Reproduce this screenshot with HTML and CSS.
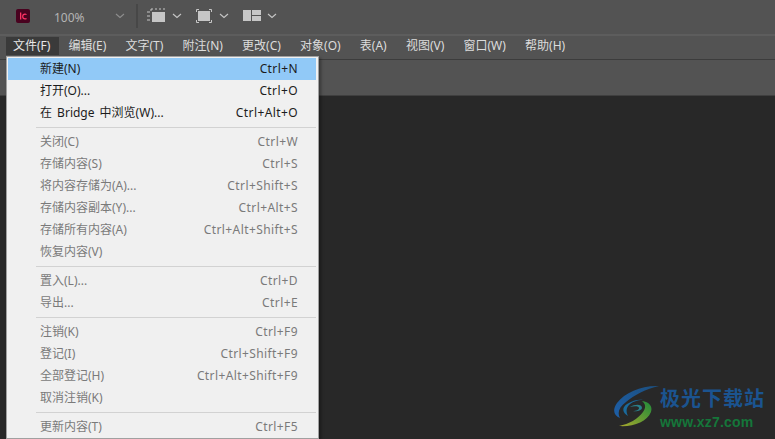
FILE: index.html
```html
<!DOCTYPE html>
<html lang="zh-CN">
<head>
<meta charset="utf-8">
<title>InCopy</title>
<link rel="stylesheet" href="styles.css">
</head>
<body>
<div class="app">
  <header class="toolbar">
    <svg class="app-icon" width="14" height="14" viewBox="0 0 14 14"><rect width="14" height="14" rx="2" fill="#49021f"/><rect x="4" y="3.5" width="1.3" height="7" fill="#ff3366"/><path d="M10.5 5.6A2.4 2.4 0 0 0 9 5.1c-1.4 0-2.3 1-2.3 2.4s.9 2.4 2.3 2.4c.6 0 1.1-.2 1.5-.5" fill="none" stroke="#ff3366" stroke-width="1.2"/></svg>
    <span class="zoom-value">100%</span>
    <svg class="chev chev-zoom" width="10" height="6" viewBox="0 0 10 6"><path d="M1 1l4 3.5L9 1" fill="none" stroke="#8e8e8e" stroke-width="1.1"/></svg>
    <span class="divider"></span>
    <svg class="tool tool-frame" width="20" height="16" viewBox="0 0 20 16"><rect x="5" y="4" width="13" height="10" fill="#c6c6c6"/><path d="M5 0v2M9 0v2M13 0v2M17 0v2M0 4h3M0 8h3M0 12h3M3 2h2" stroke="#c6c6c6" stroke-width="1" fill="none"/></svg>
    <svg class="chev" width="10" height="6" viewBox="0 0 10 6"><path d="M1 1l4 3.5L9 1" fill="none" stroke="#c6c6c6" stroke-width="1.1"/></svg>
    <svg class="tool tool-screen" width="16" height="14" viewBox="0 0 16 14"><rect x="2" y="2" width="12" height="10" fill="#c6c6c6"/><path d="M.5 3V.5H3M13 .5h2.500V3M15.500 11v2.500H13M3 13.500H.5V11" stroke="#c6c6c6" fill="none"/></svg>
    <svg class="chev" width="10" height="6" viewBox="0 0 10 6"><path d="M1 1l4 3.500L9 1" fill="none" stroke="#c6c6c6" stroke-width="1.1"/></svg>
    <svg class="tool tool-layout" width="18" height="12" viewBox="0 0 18 12"><rect width="8" height="11" fill="#c6c6c6"/><rect x="9" width="9" height="5" fill="#c6c6c6"/><rect x="9" y="6" width="9" height="5" fill="#c6c6c6"/></svg>
    <svg class="chev" width="10" height="6" viewBox="0 0 10 6"><path d="M1 1l4 3.500L9 1" fill="none" stroke="#c6c6c6" stroke-width="1.1"/></svg>
  </header>
  <nav class="menubar">
    <span class="menu-title is-open">文件(F)</span>
    <span class="menu-title">编辑(E)</span>
    <span class="menu-title">文字(T)</span>
    <span class="menu-title">附注(N)</span>
    <span class="menu-title">更改(C)</span>
    <span class="menu-title">对象(O)</span>
    <span class="menu-title">表(A)</span>
    <span class="menu-title">视图(V)</span>
    <span class="menu-title">窗口(W)</span>
    <span class="menu-title">帮助(H)</span>
  </nav>
  <div class="panelbar"></div>
  <main class="canvas"></main>
</div>

<div class="menu">
  <div class="item active"><span>新建(N)</span><span>Ctrl+N</span></div>
  <div class="item enabled"><span>打开(O)...</span><span>Ctrl+O</span></div>
  <div class="item enabled"><span>在 Bridge 中浏览(W)...</span><span>Ctrl+Alt+O</span></div>
  <div class="sep"></div>
  <div class="item"><span>关闭(C)</span><span>Ctrl+W</span></div>
  <div class="item"><span>存储内容(S)</span><span>Ctrl+S</span></div>
  <div class="item"><span>将内容存储为(A)...</span><span>Ctrl+Shift+S</span></div>
  <div class="item"><span>存储内容副本(Y)...</span><span>Ctrl+Alt+S</span></div>
  <div class="item"><span>存储所有内容(A)</span><span>Ctrl+Alt+Shift+S</span></div>
  <div class="item"><span>恢复内容(V)</span></div>
  <div class="sep"></div>
  <div class="item"><span>置入(L)...</span><span>Ctrl+D</span></div>
  <div class="item"><span>导出...</span><span>Ctrl+E</span></div>
  <div class="sep"></div>
  <div class="item"><span>注销(K)</span><span>Ctrl+F9</span></div>
  <div class="item"><span>登记(I)</span><span>Ctrl+Shift+F9</span></div>
  <div class="item"><span>全部登记(H)</span><span>Ctrl+Alt+Shift+F9</span></div>
  <div class="item"><span>取消注销(K)</span></div>
  <div class="sep"></div>
  <div class="item"><span>更新内容(T)</span><span>Ctrl+F5</span></div>
</div>

<div class="watermark">
  <svg class="wm-logo" width="46" height="42" viewBox="0 0 46 42">
    <defs>
      <linearGradient id="wmBlue" x1="0" y1="1" x2="1" y2="0"><stop offset="0" stop-color="#1d5fa8"/><stop offset="1" stop-color="#1c4f7e"/></linearGradient>
      <linearGradient id="wmGreen" x1="0" y1="1" x2="1" y2="0"><stop offset="0" stop-color="#a8a82c"/><stop offset="1" stop-color="#1e8a3a"/></linearGradient>
    </defs>
    <path d="M46 1C30 0 12 7 4 18c-5 7-3 13 3 15-3-5-1-11 6-16C21 10 33 4 46 1z" fill="url(#wmBlue)"/>
    <path d="M15 31c-5-3-7-8-1-12 6-4 12-5 16-4-6 0-11 2-14 5-3 3-3 7-1 11z" fill="#1a6a9c"/>
    <path d="M17 22c5-3 12-3 12 1 0 2-5 4-9 3 3 0 6-1 6-3 0-2-5-2-9-1z" fill="#2a7f8a"/>
    <path d="M6 41c14 1 28-4 32-14 2-6-2-10-9-11 4 3 4 7 1 11-5 7-14 12-24 14z" fill="url(#wmGreen)"/>
  </svg>
  <div class="wm-text">
    <div class="wm-name">极光下载站</div>
    <div class="wm-url">www.xz7.com</div>
  </div>
</div>
</body>
</html>
```
FILE: styles.css
```css
* { box-sizing: border-box; }
html, body { margin: 0; padding: 0; }
body {
  width: 775px;
  height: 439px;
  overflow: hidden;
  background: #282828;
  font-family: "Noto Sans", "Noto Sans CJK SC", sans-serif;
  font-size: 12px;
  position: relative;
}
.app { display: flex; flex-direction: column; height: 439px; }
.toolbar {
  height: 34px;
  background: #535353;
  display: flex;
  align-items: center;
  padding: 0 0 2px 16px;
  flex: none;
}
.zoom-value { margin-left: 24px; margin-top: 2px; width: 32px; color: #b4b4b4; font-size: 12px; }
.chev-zoom { margin-left: 29px; }
.divider { width: 2px; height: 24px; background: #474747; margin: 0 9px 0 11px; }
.chev { flex: none; }
.tool { flex: none; }
.tool-frame + .chev { margin-left: 5px; }
.tool-screen { margin-left: 14px; }
.tool-screen + .chev { margin-left: 7px; }
.tool-layout { margin-left: 14px; }
.tool-layout + .chev { margin-left: 6px; }
.menubar {
  height: 26px;
  flex: none;
  background: #535353;
  border-top: 2px solid #5d5d5d;
  border-bottom: 1px solid #3c3c3c;
  display: flex;
  align-items: flex-start;
  padding: 1px 0 0 6px;
  color: #dcdcdc;
  font-size: 12px;
}
.menu-title { height: 18px; line-height: 17px; padding: 0 7px; margin-right: 5.200px; white-space: nowrap; }
.menu-title.is-open { background: #3a3a3a; color: #e8e8e8; padding-right: 9px; margin-right: 2px; }
.panelbar { height: 36px; flex: none; background: #535353; border-bottom: 1px solid #3f3f3f; }
.canvas { flex: 1; background: #282828; }

.menu {
  position: absolute;
  left: 6px;
  top: 56px;
  width: 313px;
  padding: 1px 2px 0 1px;
  background: #f0f0f0;
  border: 1px solid #a0a0a0;
  box-shadow: 2px 2px 3px rgba(0, 0, 0, .35);
  color: #7a7a7a;
  font-size: 12px;
}
.item {
  height: 22px;
  display: flex;
  justify-content: space-between;
  align-items: center;
  padding: 0 18px 0 32px;
  line-height: 20px;
  white-space: nowrap;
  word-spacing: 2px;
}
.item span + span { letter-spacing: .4px; }
.item.enabled, .item.active { color: #1c1c1c; }
.item.active { background: #91c9f7; }
.sep { height: 7px; padding: 3px 0 3px 28px; }
.sep::before { content: ""; display: block; height: 1px; background: #d2d2d2; }

.watermark {
  position: absolute;
  left: 613px;
  top: 385px;
  display: flex;
  align-items: flex-start;
  gap: 1px;
}
.wm-logo { flex: none; }
.wm-name { color: #1b5490; font-family: "Noto Sans CJK SC", sans-serif; font-size: 20px; font-weight: 700; line-height: 22px; letter-spacing: 1px; margin-top: 2px; }
.wm-url { color: #15763a; font-family: "Liberation Sans", sans-serif; font-size: 14px; font-weight: 700; line-height: 16px; margin-top: 5px; letter-spacing: .2px; }
```
